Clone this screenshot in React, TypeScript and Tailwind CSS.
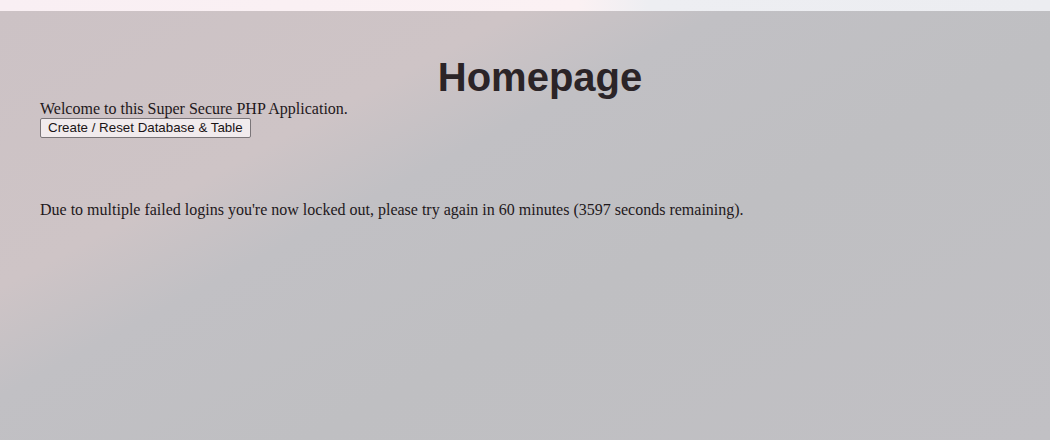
export default function App() {
  return (
    <div className="flex h-[440px] w-[1050px] flex-col overflow-hidden">
      <div className="h-[11px] shrink-0 bg-[linear-gradient(90deg,#f9eff3_0%,#fbf1f3_55%,#edeef2_62%,#ecedf1_100%)]" />
      <main className="flex-1 bg-[linear-gradient(152deg,#ccc2c5_0%,#cec4c6_28%,#c1c0c4_39%,#bfbfc2_60%,#c1c0c4_100%)] pl-10 pr-[10px] font-['Liberation_Serif',serif] text-base leading-[1.15] text-[#1e181b]">
        <h1 className="mt-[43px] text-center font-['Liberation_Sans',sans-serif] text-[40px] font-bold leading-[46px] text-[#2b2427]">
          Homepage
        </h1>
        <p>Welcome to this Super Secure PHP Application.</p>
        <button className="block rounded-[2px] border border-[#7b7679] bg-[#f1ebed] px-[7px] py-[1px] font-['Liberation_Sans',sans-serif] text-[13.33px] leading-[16px] text-[#1a1416]">
          Create / Reset Database &amp; Table
        </button>
        <p className="mt-[63px]">
          Due to multiple failed logins you're now locked out, please try again in 60 minutes (3597 seconds remaining).
        </p>
      </main>
    </div>
  );
}
